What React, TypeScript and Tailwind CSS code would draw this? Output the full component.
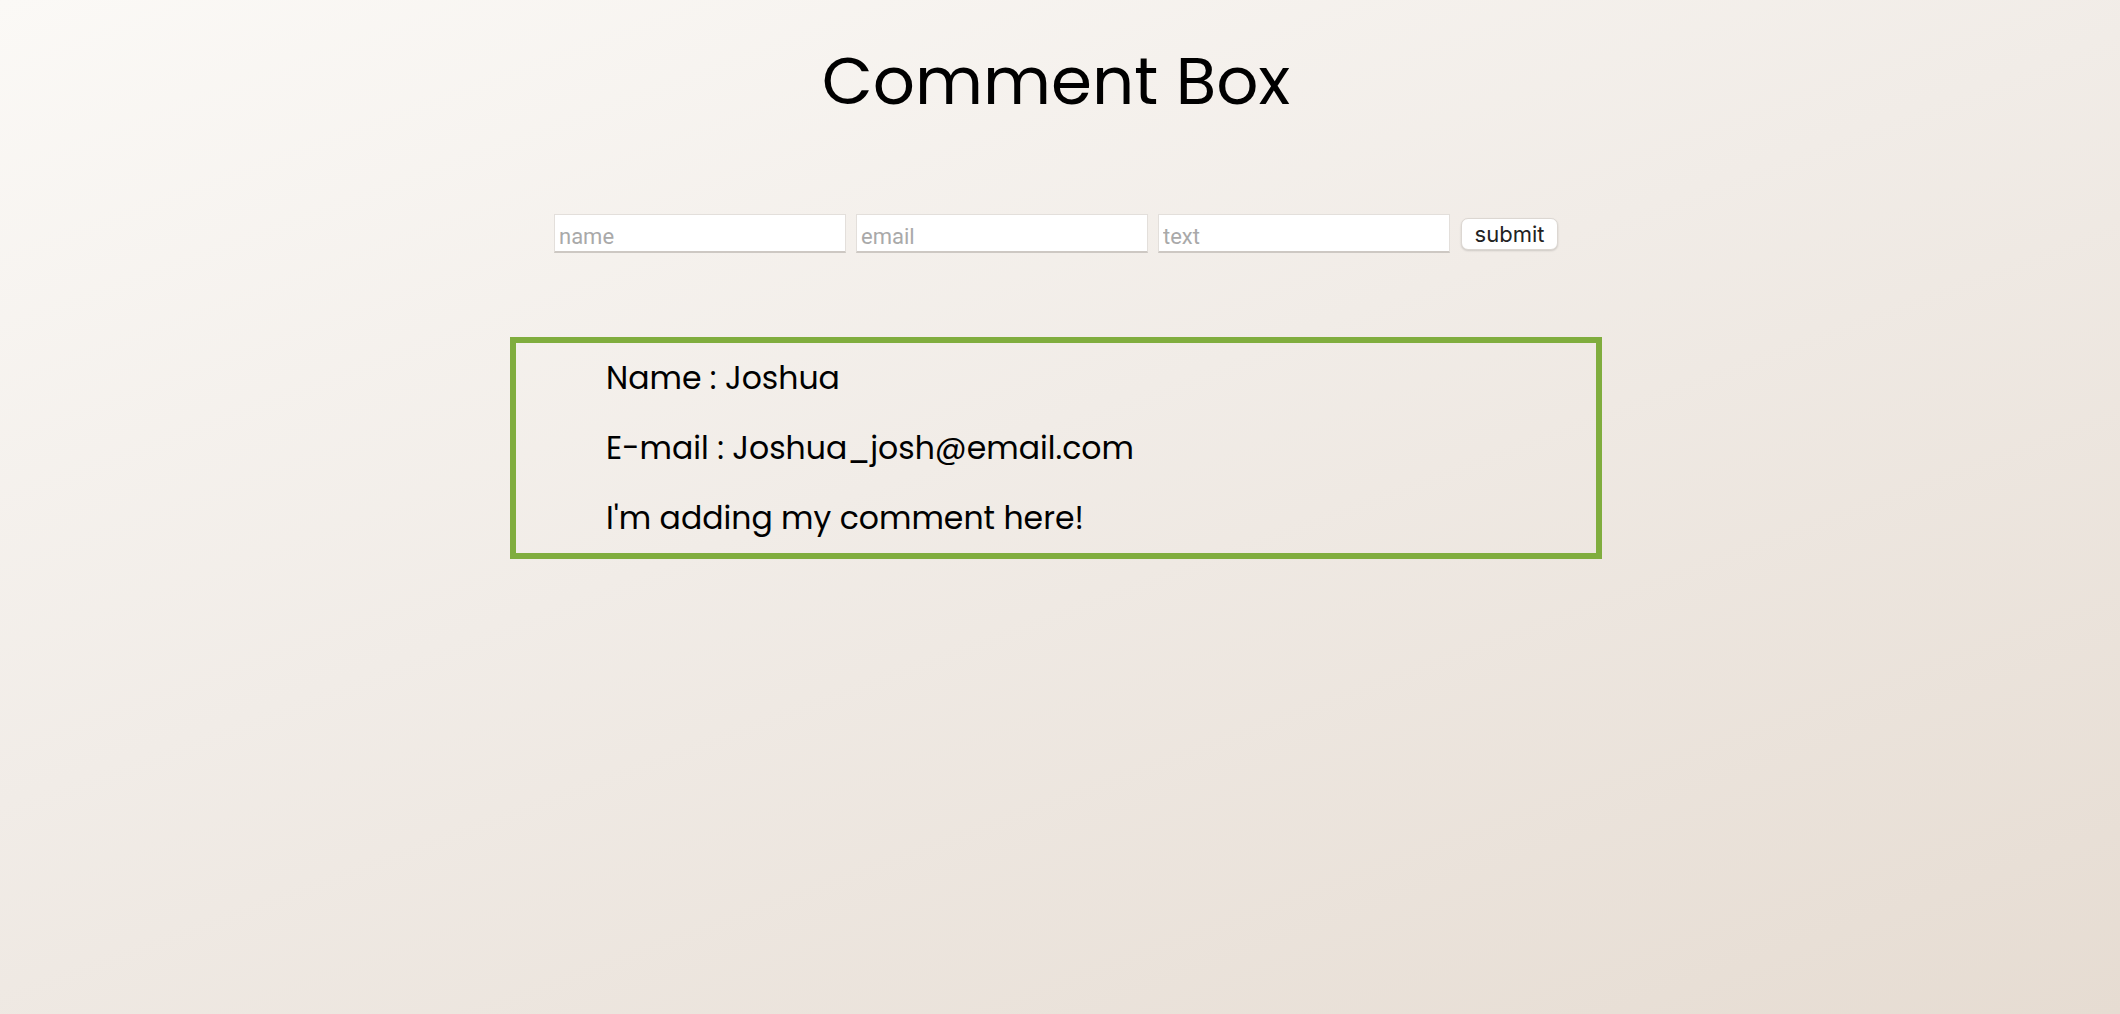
export default function App() {
  const inputCls =
    "h-[39px] w-[292px] border border-b-2 border-[#e3dfdb] border-b-[#cdc8c3] bg-white px-[4px] pt-[7px] text-[22px] outline-none placeholder:text-[#a9a9a9]";
  return (
    <div
      className="min-h-[1014px] w-full bg-[linear-gradient(160deg,#fbf9f6_0%,#f1ece7_45%,#e6dcd2_100%)] pr-[8px] text-black"
      style={{ fontFamily: "Poppins, 'Open Sans', sans-serif" }}
    >
      <h1 className="pt-[38px] text-center text-[66px] font-normal leading-[86px]">
        Comment Box
      </h1>
      <form
        className="mt-[90px] flex items-center justify-center gap-[10px]"
        onSubmit={(e) => e.preventDefault()}
      >
        <input
          placeholder="name"
          className={inputCls}
          style={{ fontFamily: "Roboto, 'Liberation Sans', sans-serif" }}
        />
        <input
          placeholder="email"
          className={inputCls}
          style={{ fontFamily: "Roboto, 'Liberation Sans', sans-serif" }}
        />
        <input
          placeholder="text"
          className={inputCls}
          style={{ fontFamily: "Roboto, 'Liberation Sans', sans-serif" }}
        />
        <button
          type="submit"
          className="ml-[1px] h-[32px] w-[97px] rounded-[7px] border border-[#dcd7d2] bg-white text-[22px] leading-none text-[#222] shadow-[0_1px_2px_rgba(0,0,0,0.15)]"
          style={{ fontFamily: "Inter, 'Liberation Sans', sans-serif" }}
        >
          submit
        </button>
      </form>
      <div className="mx-auto mt-[84px] w-[1092px] border-[6px] border-[#80ad3e] pl-[90px]">
        <p className="text-[31.5px] leading-[70px]">Name : Joshua</p>
        <p className="text-[31.5px] leading-[70px]">E-mail : Joshua_josh@email.com</p>
        <p className="text-[31.5px] leading-[70px]">I'm adding my comment here!</p>
      </div>
    </div>
  );
}
